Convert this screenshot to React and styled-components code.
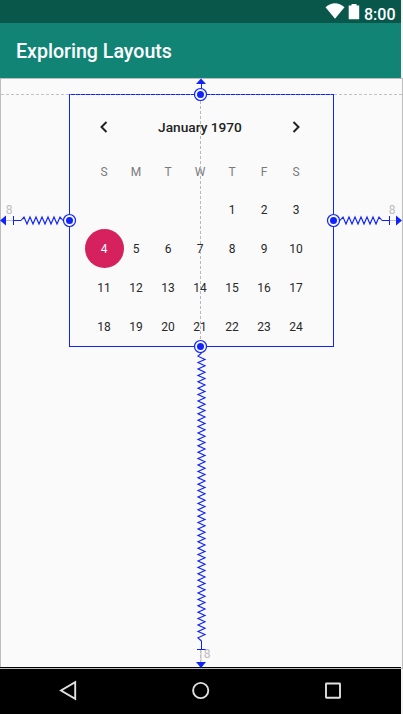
import React from "react";
import styled, { createGlobalStyle } from "styled-components";

const BLUE = "#1024fa";

const GlobalStyle = createGlobalStyle`
  * { box-sizing: border-box; }
  body { margin: 0; background: #f2f2f2; font-family: Roboto, sans-serif; }
`;

const Screen = styled.div`
  position: relative;
  display: flex;
  flex-direction: column;
  width: 403px;
  height: 714px;
  overflow: hidden;
  background: #f2f2f2;
`;

const StatusBar = styled.header`
  display: flex;
  justify-content: flex-end;
  align-items: flex-start;
  width: 401px;
  height: 23px;
  padding-right: 5px;
  background: #08574a;
  color: #fff;
`;

const StatusIcons = styled.svg`
  width: 38px;
  height: 23px;
  margin-right: 1px;
`;

const Clock = styled.span`
  width: 32px;
  font-size: 16px;
  font-weight: 500;
  line-height: 19px;
  padding-top: 5px;
  white-space: nowrap;
`;

const AppBar = styled.div`
  display: flex;
  align-items: center;
  width: 401px;
  height: 55px;
  padding: 3px 0 0 16px;
  background: #128476;
`;

const Title = styled.h1`
  margin: 0;
  color: #fff;
  font-size: 19.6px;
  font-weight: 500;
  line-height: 24px;
`;

const Canvas = styled.main`
  height: 591px;
  padding: 15px 0 0 68px;
  border: 1px solid #bdbdbd;
  border-bottom: 0;
  background: #fafafa;
`;

const Calendar = styled.section`
  width: 265px;
  height: 253px;
  padding: 0 21px 0 18px;
  border: 1px solid ${BLUE};
`;

const MonthBar = styled.div`
  display: grid;
  grid-template-columns: 32px 1fr 32px;
  align-items: center;
  justify-items: center;
  height: 63px;
`;

const Month = styled.h2`
  margin: 0;
  color: #222;
  font-size: 13.7px;
  font-weight: 500;
  line-height: 18px;
  white-space: nowrap;
`;

const Chevron = styled.svg`
  width: 10px;
  height: 14px;
  fill: none;
  stroke: #222;
  stroke-width: 2;
`;

const Days = styled.div`
  display: grid;
  grid-template-columns: repeat(7, minmax(0, 1fr));
  grid-template-rows: 31.5px repeat(4, 39px);
  align-items: center;
  justify-items: center;
`;

const Weekday = styled.span`
  padding-bottom: 3px;
  font-size: 12px;
  line-height: 14px;
  color: #7b7b7b;
`;

const Day = styled.span`
  display: flex;
  align-items: center;
  justify-content: center;
  width: 39px;
  height: 39px;
  margin: 0 -4px;
  border-radius: 50%;
  padding-top: 1px;
  font-size: 12px;
  line-height: 14px;
  color: ${(p) => (p.$selected ? "#fff" : "#282828")};
  background: ${(p) => (p.$selected ? "#d6215f" : "transparent")};
`;

const NavBar = styled.footer`
  width: 401px;
  height: 45px;
  background: #000;
`;

const NavIcons = styled.svg`
  display: block;
  width: 401px;
  height: 45px;
  fill: none;
  stroke: #e0e0e0;
  stroke-width: 1.9;
`;

const Constraints = styled.svg`
  position: absolute;
  inset: 0;
  width: 403px;
  height: 714px;
  pointer-events: none;
`;

const Margin = styled.text`
  font-family: Roboto, sans-serif;
  font-size: 12px;
  fill: #bdbdbd;
`;

const spring = (start, end, cross, vertical) => {
  const steps = Math.round((end - start) / (vertical ? 3.2 : 3));
  const points = [];
  for (let i = 0; i <= steps; i++) {
    const along = start + (i * (end - start)) / steps;
    const off = i === 0 || i === steps ? cross : cross + (i % 2 ? -3.5 : 3.5);
    points.push(vertical ? `${off},${along}` : `${along},${off}`);
  }
  return points.join(" ");
};

const Handle = ({ x, y }) => (
  <g>
    <circle cx={x} cy={y} r="6" fill="#fafafa" stroke={BLUE} strokeWidth="1.2" />
    <circle cx={x} cy={y} r="3.5" fill={BLUE} stroke="none" />
  </g>
);

const weekdays = ["S", "M", "T", "W", "T", "F", "S"];
const days = [null, null, null, null, ...Array.from({ length: 24 }, (_, i) => i + 1)];

export default function App() {
  return (
    <>
      <GlobalStyle />
      <Screen>
        <StatusBar>
          <StatusIcons viewBox="0 0 38 23" fill="#fff">
            <path d="M0.5 7.2Q10 -0.5 19.5 7.2L10 18.8Z" />
            <path d="M26.5 4h5v1.5h2.7v13.8H23.7V5.5h2.8Z" />
          </StatusIcons>
          <Clock>8:00</Clock>
        </StatusBar>
        <AppBar>
          <Title>Exploring Layouts</Title>
        </AppBar>
        <Canvas>
          <Calendar>
            <MonthBar>
              <Chevron viewBox="0 0 10 14"><path d="M7.5 2 2.5 7l5 5" /></Chevron>
              <Month>January 1970</Month>
              <Chevron viewBox="0 0 10 14"><path d="m2.5 2 5 5-5 5" /></Chevron>
            </MonthBar>
            <Days>
              {weekdays.map((d, i) => <Weekday key={`w${i}`}>{d}</Weekday>)}
              {days.map((d, i) => <Day key={i} $selected={d === 4}>{d}</Day>)}
            </Days>
          </Calendar>
        </Canvas>
        <NavBar>
          <NavIcons viewBox="0 0 401 45">
            <path d="M75.2 13.2v16.6L61 21.5Z" />
            <circle cx="200.7" cy="21.5" r="7.6" />
            <rect x="326" y="14.5" width="14" height="14.3" rx="0.5" />
          </NavIcons>
        </NavBar>
        <Constraints viewBox="0 0 403 714" fill="none" stroke={BLUE}>
          <path d="M0 667.5H401" stroke="#000" />
          <path d="M0 668.5H403" stroke="#bdbdbd" />
          <g stroke="#c2c2c2" strokeDasharray="3 2">
            <path d="M1 94.5H69M334 94.5H402" />
            <path d="M200.5 101V340" stroke="#b8b8b8" />
          </g>
          <path d="M70 94.5H333" stroke="#8088f2" strokeDasharray="1 4" />
          <path d="M5 220.5H13M389 220.5H396M201 650V662" stroke="#bdbdbd" />
          <path d="M200.5 650V662" stroke="#bdbdbd" strokeDasharray="3 2" />
          <path d="M13.5 216V225M13 220.5H21M389.5 216V225M382 220.5H389M201.5 641V649M197 649.5H206M201.5 82V90" />
          <g strokeWidth="1.15">
            <polyline points={spring(21, 63, 220.5, false)} />
            <polyline points={spring(340, 382, 220.5, false)} />
            <polyline points={spring(353, 641, 201.5, true)} />
          </g>
          <g fill={BLUE} stroke="none">
            <path d="M0 220.5 6 215.5V225.5Z" />
            <path d="M402 220.5 396 215.5V225.5Z" />
            <path d="M201 78.5 206 84H196Z" />
            <path d="M201 668 206 662H196Z" />
          </g>
          <Handle x={200.5} y={94.5} />
          <Handle x={69.5} y={220.5} />
          <Handle x={333.5} y={220.5} />
          <Handle x={200.5} y={346.5} />
          <g stroke="none">
            <Margin x="5.8" y="214">8</Margin>
            <Margin x="388.8" y="214">8</Margin>
            <Margin x="203.8" y="658">8</Margin>
          </g>
        </Constraints>
      </Screen>
    </>
  );
}
